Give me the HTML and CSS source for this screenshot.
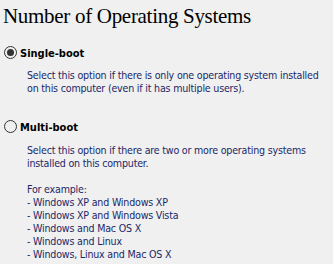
FILE: index.html
```html
<!DOCTYPE html>
<html>
<head>
<meta charset="utf-8">
<link rel="stylesheet" href="styles.css">
</head>
<body>
<h1 class="title">Number of Operating Systems</h1>

<div class="option option-first">
  <div class="option-row">
    <span class="radio radio-checked"><span class="radio-dot"></span></span>
    <span class="option-label">Single-boot</span>
  </div>
  <div class="desc">
    <p>Select this option if there is only one operating system installed<br>on this computer (even if it has multiple users).</p>
  </div>
</div>

<div class="option option-second">
  <div class="option-row">
    <span class="radio"></span>
    <span class="option-label">Multi-boot</span>
  </div>
  <div class="desc">
    <p>Select this option if there are two or more operating systems<br>installed on this computer.</p>
    <p class="examples">For example:<br>- Windows XP and Windows XP<br>- Windows XP and Windows Vista<br>- Windows and Mac OS X<br>- Windows and Linux<br>- Windows, Linux and Mac OS X</p>
  </div>
</div>
</body>
</html>
```
FILE: styles.css
```css
html, body {
  margin: 0;
  padding: 0;
  background: #f0f0f0;
}

body {
  width: 333px;
  height: 264px;
  overflow: hidden;
}

.title {
  margin: 0;
  padding: 4px 0 0 3px;
  font-family: "Liberation Serif", "Times New Roman", serif;
  font-weight: normal;
  font-size: 21px;
  letter-spacing: -0.3px;
  line-height: 24px;
  color: #000;
}

.option-first {
  margin-top: 19px;
}

.option-second {
  margin-top: 26px;
}

.option-row {
  display: flex;
  align-items: flex-start;
  gap: 3px;
  padding-left: 4px;
}

.radio {
  box-sizing: border-box;
  width: 13px;
  height: 13px;
  margin-top: -1px;
  border: 1.3px solid #333;
  border-radius: 50%;
  background: transparent;
  display: flex;
  align-items: center;
  justify-content: center;
  flex: none;
}

.radio-dot {
  width: 7px;
  height: 7px;
  border-radius: 50%;
  background: #333;
}

.option-label {
  font-family: "DejaVu Sans Condensed", "DejaVu Sans", sans-serif;
  font-weight: bold;
  font-size: 11px;
  line-height: 14px;
  color: #000;
}

.desc {
  margin: 8px 0 0 27px;
  font-family: "DejaVu Sans Condensed", "DejaVu Sans", sans-serif;
  font-size: 10.6px;
  letter-spacing: -0.2px;
  line-height: 13px;
  color: #1b2868;
}

.option-second .desc {
  margin-top: 9px;
}

.desc p {
  margin: 0;
}

.desc .examples {
  margin-top: 13px;
}
```
